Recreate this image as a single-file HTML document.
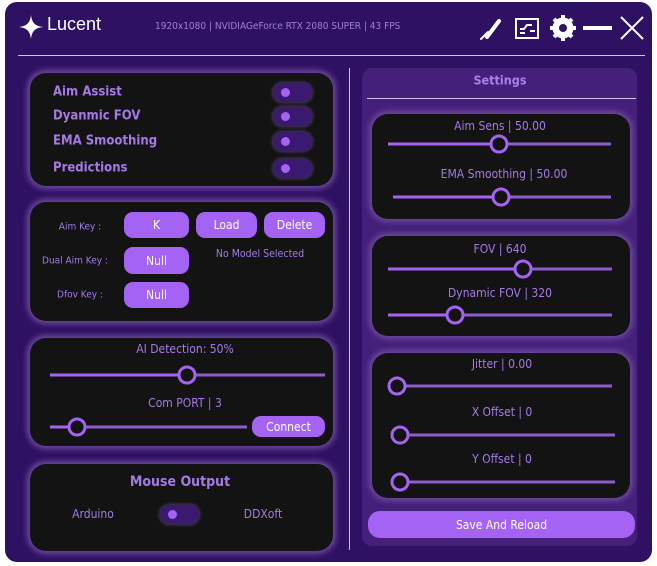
<!DOCTYPE html>
<html><head><meta charset="utf-8"><style>
*{margin:0;padding:0;box-sizing:border-box}
body{width:657px;height:566px;background:#fff;position:relative;overflow:hidden;font-family:"DejaVu Sans Condensed","DejaVu Sans","Liberation Sans",sans-serif;font-stretch:condensed}
.win{position:absolute;left:5px;top:2px;width:647px;height:560px;background:#2f1163;border-radius:12px}
.a{position:absolute}
.p{position:absolute;background:#131313;border-radius:16px;box-shadow:0 0 6px 3px #6c4a9e}
.t{position:absolute;color:#a57ae6;font-size:12px;white-space:nowrap;transform:translate(-50%,-50%)}
.l{position:absolute;color:#a57ae6;font-size:13px;font-weight:bold;white-space:nowrap;transform:translateY(-50%)}
.tg{position:absolute;width:39px;height:19px;border-radius:10px;background:#3a1a6e;box-shadow:0 0 3px 1px #4b3a63}
.tg::after{content:"";position:absolute;left:8px;top:5px;width:9px;height:9px;border-radius:50%;background:#a463f2}
.b{position:absolute;background:#a463f2;color:#fff;font-size:12px;border-radius:9px;display:flex;align-items:center;justify-content:center}
.tr{position:absolute;height:3px;background:#8b5ecc;transform:translateY(-50%)}
.tr i{position:absolute;left:0;top:0;height:3px;background:#a463f2}
.k{position:absolute;width:19px;height:19px;border-radius:50%;border:3px solid #a463f2;background:#131313;transform:translate(-50%,-50%)}
</style></head><body>
<div class="win"></div>
<svg class="a" style="left:19px;top:15px" width="24" height="24" viewBox="0 0 24 24"><path d="M12 0 C13 8 16 11 24 12 C16 13 13 16 12 24 C11 16 8 13 0 12 C8 11 11 8 12 0Z" fill="#fff"/></svg>
<div class="a" style="left:47px;top:14px;color:#fff;font-size:18px;font-family:'Liberation Sans',sans-serif">Lucent</div>
<div class="a" style="left:155px;top:21px;color:#a07fd6;font-size:10px">1920x1080 | NVIDIAGeForce RTX 2080 SUPER | 43 FPS</div>
<svg class="a" style="left:478px;top:14px" width="170" height="28" viewBox="0 0 170 28">
<path d="M3 25 L10 18" stroke="#fff" stroke-width="2" stroke-linecap="round"/><path d="M9 23 L21 7" stroke="#fff" stroke-width="4" stroke-linecap="round"/>
<rect x="38" y="5" width="22" height="19" fill="none" stroke="#fff" stroke-width="2"/><path d="M42 19h5M42 15h4l3-4h5M52 17h5" stroke="#fff" stroke-width="2"/>
<circle cx="85" cy="14" r="8" fill="none" stroke="#fff" stroke-width="5"/><path d="M85 1v26M72 14h26M76 5l18 18M94 5l-18 18" stroke="#fff" stroke-width="4"/><circle cx="85" cy="14" r="4" fill="#2f1163"/>
<path d="M105 14h29" stroke="#fff" stroke-width="4"/>
<path d="M143 3l22 22M165 3l-22 22" stroke="#fff" stroke-width="2"/>
</svg>
<div class="a" style="left:18px;top:55px;width:627px;height:1px;background:#cfc2e8"></div>
<div class="a" style="left:349px;top:68px;width:1px;height:482px;background:#cfc2e8"></div>

<div class="p" style="left:30px;top:73px;width:303px;height:113px"></div>
<div class="l" style="left:53px;top:92px">Aim Assist</div>
<div class="l" style="left:53px;top:116px">Dyanmic FOV</div>
<div class="l" style="left:53px;top:141px">EMA Smoothing</div>
<div class="l" style="left:53px;top:168px">Predictions</div>
<div class="tg" style="left:273px;top:83px"></div><div class="tg" style="left:273px;top:107px"></div><div class="tg" style="left:273px;top:132px"></div><div class="tg" style="left:273px;top:159px"></div>

<div class="p" style="left:30px;top:202px;width:303px;height:119px"></div>
<div class="t" style="left:80px;top:227px;font-size:10px">Aim Key :</div>
<div class="t" style="left:75px;top:261px;font-size:10px">Dual Aim Key :</div>
<div class="t" style="left:80px;top:295px;font-size:10px">Dfov Key :</div>
<div class="b" style="left:124px;top:212px;width:65px;height:26px">K</div>
<div class="b" style="left:196px;top:212px;width:61px;height:26px">Load</div>
<div class="b" style="left:264px;top:212px;width:61px;height:26px">Delete</div>
<div class="b" style="left:124px;top:247px;width:65px;height:27px">Null</div>
<div class="b" style="left:124px;top:282px;width:65px;height:26px">Null</div>
<div class="t" style="left:260px;top:254px;font-size:10.5px">No Model Selected</div>

<div class="p" style="left:30px;top:338px;width:303px;height:108px"></div>
<div class="t" style="left:185px;top:349px">AI Detection: 50%</div>
<div class="tr" style="left:50px;top:375px;width:275px"><i style="width:137px"></i></div><div class="k" style="left:187px;top:375px"></div>
<div class="t" style="left:185px;top:403px">Com PORT | 3</div>
<div class="tr" style="left:50px;top:427px;width:197px"><i style="width:27px"></i></div><div class="k" style="left:77px;top:427px"></div>
<div class="b" style="left:252px;top:416px;width:73px;height:21px">Connect</div>

<div class="p" style="left:30px;top:464px;width:303px;height:87px"></div>
<div class="t" style="left:180px;top:482px;font-size:14px;font-weight:bold">Mouse Output</div>
<div class="t" style="left:93px;top:514px">Arduino</div>
<div class="tg" style="left:160px;top:505px"></div>
<div class="t" style="left:263px;top:514px">DDXoft</div>

<div class="a" style="left:362px;top:68px;width:275px;height:478px;background:#45207a;border-radius:10px"></div>
<div class="t" style="left:500px;top:80px;font-size:12.5px;font-weight:bold;color:#a882e8">Settings</div>
<div class="a" style="left:367px;top:98px;width:269px;height:1px;background:#cfc2e8"></div>

<div class="p" style="left:372px;top:114px;width:258px;height:105px"></div>
<div class="t" style="left:500px;top:126px">Aim Sens | 50.00</div>
<div class="tr" style="left:388px;top:144px;width:223px"><i style="width:111px"></i></div><div class="k" style="left:499px;top:144px"></div>
<div class="t" style="left:504px;top:174px">EMA Smoothing | 50.00</div>
<div class="tr" style="left:393px;top:197px;width:218px"><i style="width:108px"></i></div><div class="k" style="left:501px;top:197px"></div>

<div class="p" style="left:372px;top:236px;width:258px;height:100px"></div>
<div class="t" style="left:500px;top:249px">FOV | 640</div>
<div class="tr" style="left:388px;top:269px;width:224px"><i style="width:135px"></i></div><div class="k" style="left:523px;top:269px"></div>
<div class="t" style="left:500px;top:293px">Dynamic FOV | 320</div>
<div class="tr" style="left:388px;top:315px;width:224px"><i style="width:67px"></i></div><div class="k" style="left:455px;top:315px"></div>

<div class="p" style="left:372px;top:353px;width:258px;height:145px"></div>
<div class="t" style="left:502px;top:364px">Jitter | 0.00</div>
<div class="tr" style="left:397px;top:386px;width:215px"></div><div class="k" style="left:397px;top:386px"></div>
<div class="t" style="left:502px;top:412px">X Offset | 0</div>
<div class="tr" style="left:400px;top:435px;width:215px"></div><div class="k" style="left:400px;top:435px"></div>
<div class="t" style="left:502px;top:459px">Y Offset | 0</div>
<div class="tr" style="left:400px;top:482px;width:215px"></div><div class="k" style="left:400px;top:482px"></div>

<div class="b" style="left:368px;top:511px;width:267px;height:27px;border-radius:12px">Save And Reload</div>
</body></html>
